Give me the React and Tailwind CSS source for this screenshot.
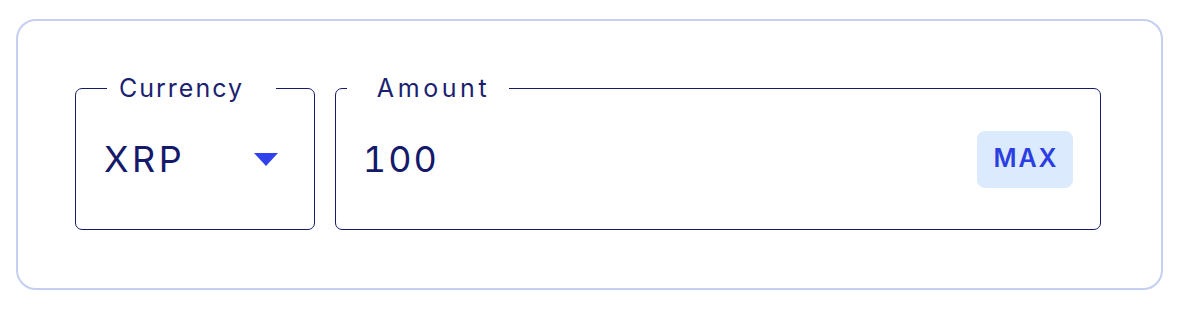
export default function App() {
  return (
    <div className="w-[1179px] h-[330px] bg-white pl-[16px] pt-[19px]" style={{ fontFamily: "Inter, 'Liberation Sans', sans-serif" }}>
      <div className="w-[1147px] h-[271px] border-2 border-[#c5d0f1] rounded-[20px] pl-[57px] pr-[60px] pt-[55px] flex gap-[20px]">
        <fieldset className="w-[240px] h-[154px] border border-[#151a6c] rounded-[7px] pl-[31px] m-0 p-0 min-w-0">
          <legend className="pl-[12px] pr-[32px] text-[25px] leading-[24px] text-[#1b1f70] tracking-[2px]">Currency</legend>
          <div className="h-[128px] flex items-center justify-between pl-[28px] pr-[36px] pb-[10px] -ml-[31px]">
            <span className="text-[36px] leading-none text-[#15196a] tracking-[3.5px]">XRP</span>
            <svg width="24" height="13" viewBox="0 0 24 13"><path d="M0 0 H24 L12 13 Z" fill="#3142ec" /></svg>
          </div>
        </fieldset>
        <fieldset className="w-[767px] h-[154px] border border-[#151a6c] rounded-[7px] pl-[11px] m-0 p-0 min-w-0">
          <legend className="pl-[30px] pr-[19px] text-[25px] leading-[24px] text-[#1b1f70] tracking-[3.6px]">Amount</legend>
          <div className="h-[128px] flex items-center justify-between pl-[27px] pr-[27px] pb-[10px] -ml-[11px]">
            <span className="text-[36px] leading-none text-[#15196a] tracking-[2px] tabular-nums">100</span>
            <div className="w-[96px] h-[57px] rounded-[8px] bg-[#dceafd] flex items-center justify-center text-[25px] font-semibold text-[#2b3ee2] tracking-[2px] pl-[2px]">MAX</div>
          </div>
        </fieldset>
      </div>
    </div>
  );
}
